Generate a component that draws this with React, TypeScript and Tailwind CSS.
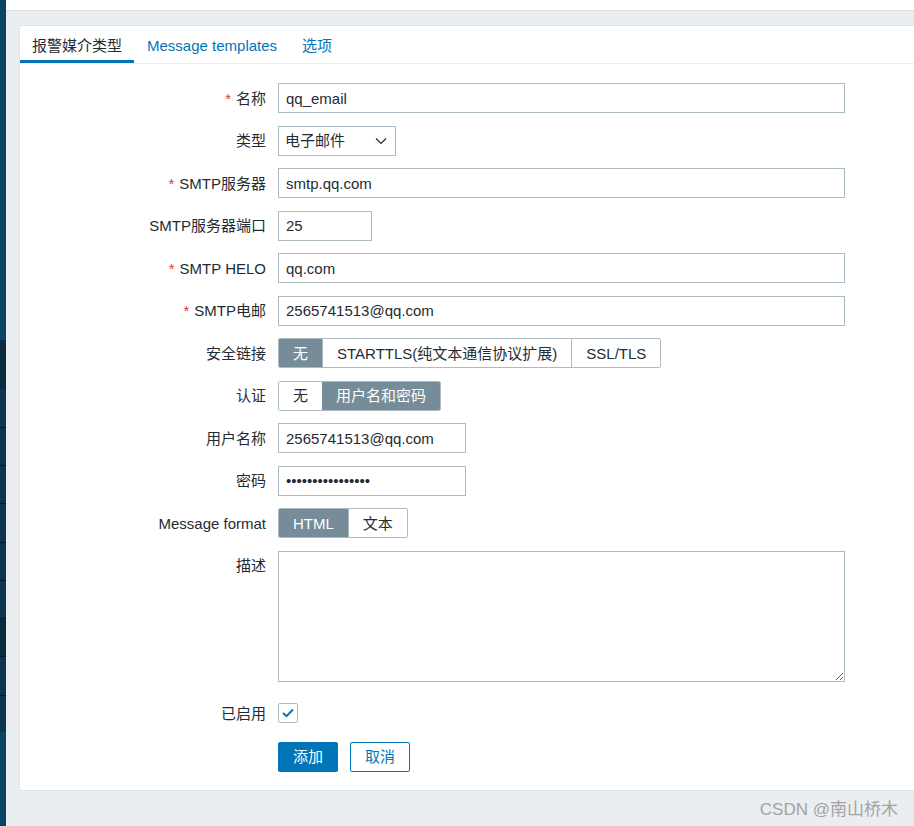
export default function App() {
  const font = {
    fontFamily: '"Liberation Sans", Arial, "Noto Sans CJK SC", sans-serif',
  };

  return (
    <div className="flex h-[826px] w-[914px] overflow-hidden bg-[#ebeef0] text-[15px] text-[#1f2c33]" style={font}>
      {/* Sidebar strip */}
      <aside className="flex w-[6px] shrink-0 flex-col bg-[#0b4566]">
        <div className="h-[340px]" />
        <div className="h-[49px] bg-[#0a2a3d]" />
        <div className="h-[38px] bg-[#0e3550]" />
        <div className="h-[38px] border-t border-[#061a26] bg-[#0e3550]" />
        <div className="h-[38px] border-t border-[#061a26] bg-[#0e3550]" />
        <div className="h-[39px] border-t border-[#061a26] bg-[#0e3550]" />
        <div className="h-[38px] border-t border-[#061a26] bg-[#0e3550]" />
        <div className="h-[38px] border-t border-[#061a26] bg-[#0e3550]" />
        <div className="h-[38px] border-t border-[#061a26] bg-[#0a2a3d]" />
        <div className="h-[39px] border-t border-[#061a26] bg-[#0e3550]" />
        <div className="h-[37px] border-t border-[#061a26] bg-[#0e3550]" />
      </aside>

      <div className="flex min-w-0 flex-1 flex-col">
        {/* Top strip */}
        <div className="h-[11px] shrink-0 border-b border-[#dde2e6] bg-white" />

        <div className="flex flex-col pl-[13px] pt-[14px]">
          {/* Panel */}
          <div className="flex flex-col border-y border-l border-[#dfe4e7] bg-white">
            {/* Tabs */}
            <div className="flex h-[38px] border-b border-[#ebeef0]">
              <div className="flex items-center border-b-[3px] border-[#0275b8] px-[12px] pt-[6px]">报警媒介类型</div>
              <div className="flex items-center px-[13px] pt-[3px] text-[#0275b8]">Message templates</div>
              <div className="flex items-center px-[12px] pt-[3px] text-[#0275b8]">选项</div>
            </div>

            {/* Form */}
            <div className="grid grid-cols-[246px_1fr] items-start gap-x-[12px] gap-y-[12.5px] pb-[18px] pt-[19px]">
              <Label required>名称</Label>
              <TextInput value="qq_email" width="w-[567px]" />

              <Label>类型</Label>
              <div className="flex h-[30px] w-[118px] items-center justify-between border border-[#acbbc2] bg-white pl-[6px] pr-[8px] pt-[2px]">
                <span>电子邮件</span>
                <svg width="12" height="8" viewBox="0 0 12 8" fill="none" className="-mt-[2px]">
                  <path d="M1 1.5 L6 6.5 L11 1.5" stroke="#1f2c33" strokeWidth="1.2" />
                </svg>
              </div>

              <Label required>SMTP服务器</Label>
              <TextInput value="smtp.qq.com" width="w-[567px]" />

              <Label>SMTP服务器端口</Label>
              <TextInput value="25" width="w-[94px]" />

              <Label required>SMTP HELO</Label>
              <TextInput value="qq.com" width="w-[567px]" />

              <Label required>SMTP电邮</Label>
              <TextInput value="2565741513@qq.com" width="w-[567px]" />

              <Label>安全链接</Label>
              <Segmented items={["无", "STARTTLS(纯文本通信协议扩展)", "SSL/TLS"]} active={0} />

              <Label>认证</Label>
              <Segmented items={["无", "用户名和密码"]} active={1} />

              <Label>用户名称</Label>
              <TextInput value="2565741513@qq.com" width="w-[188px]" />

              <Label>密码</Label>
              <TextInput value="••••••••••••••••" width="w-[188px]" />

              <Label>Message format</Label>
              <Segmented items={["HTML", "文本"]} active={0} />

              <Label>描述</Label>
              <textarea
                readOnly
                className="block h-[131px] w-[567px] border border-[#acbbc2] bg-white outline-none"
              />

              <div className="mt-[4px] flex h-[30px] items-center justify-end pt-[2px]">已启用</div>
              <div className="mt-[4px] flex h-[30px] items-center">
                <div className="flex h-[20px] w-[20px] items-center justify-center rounded-[2px] border border-[#acbbc2] bg-white">
                  <svg width="12" height="10" viewBox="0 0 12 10" fill="none">
                    <path d="M1 5 L4.5 8.2 L11 1.5" stroke="#0275b8" strokeWidth="2" />
                  </svg>
                </div>
              </div>

              <div />
              <div className="mt-[1px] flex gap-[12px]">
                <button className="h-[30px] w-[60px] rounded-[2px] bg-[#0275b8] pt-[2px] text-white">添加</button>
                <button className="h-[30px] w-[60px] rounded-[2px] border border-[#0275b8] bg-white pt-[2px] text-[#0275b8]">取消</button>
              </div>
            </div>
          </div>

          {/* Watermark */}
          <div className="flex justify-end pr-[16px] pt-[6px] text-[17px] text-[#a3a3a3]">CSDN @南山桥木</div>
        </div>
      </div>
    </div>
  );
}

function Label({ children, required }: { children: React.ReactNode; required?: boolean }) {
  return (
    <div className="flex h-[30px] items-center justify-end whitespace-nowrap pt-[2px]">
      {required && <span className="mr-[5px] text-[#e33734]">*</span>}
      {children}
    </div>
  );
}

function TextInput({ value, width }: { value: string; width: string }) {
  return (
    <div className={`flex h-[30px] ${width} items-center border border-[#acbbc2] bg-white px-[7px] pt-[2px]`}>
      {value}
    </div>
  );
}

function Segmented({ items, active }: { items: string[]; active: number }) {
  return (
    <div className="flex h-[30px] w-fit overflow-hidden rounded-[2px] border border-[#acbbc2]">
      {items.map((item, i) => (
        <div
          key={item}
          className={
            i === active
              ? "flex items-center bg-[#768d99] px-[14px] pt-[2px] text-white"
              : "flex items-center border-l border-[#acbbc2] bg-white px-[14px] pt-[2px] first:border-l-0"
          }
        >
          {item}
        </div>
      ))}
    </div>
  );
}
